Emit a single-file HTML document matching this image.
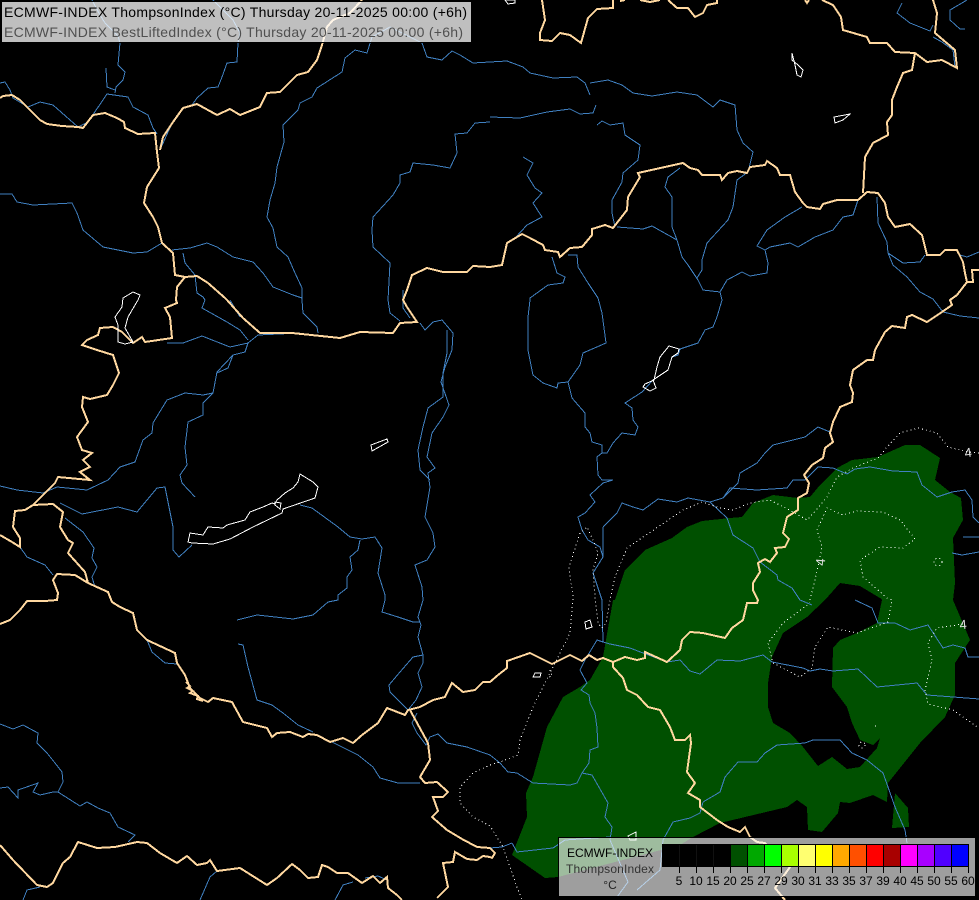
<!DOCTYPE html>
<html><head><meta charset="utf-8"><title>ECMWF-INDEX ThompsonIndex</title>
<style>
html,body{margin:0;padding:0;background:#000;width:979px;height:900px;overflow:hidden}
svg{display:block;position:absolute;left:0;top:0}
polyline,polygon.l{fill:none}
.r polyline{stroke:#4080c0;stroke-width:1}
.b polyline{stroke:#ffd8a0;stroke-width:2}
.w polygon{stroke:#fff;stroke-width:1;fill:none}
.c polyline,.c circle{stroke:#fff;stroke-width:1;fill:none;stroke-dasharray:1 3}
text{font-family:"Liberation Sans",sans-serif}
</style></head><body>
<svg width="979" height="900" viewBox="0 0 979 900" xmlns="http://www.w3.org/2000/svg">
<rect width="979" height="900" fill="#000"/>
<g fill="#005000" shape-rendering="crispEdges">
<path fill-rule="evenodd" d="M615,600 L625,570 645,550 672,538 687,527 702,521 730,518 742,517 753,503 773,495 798,498 810,497 820,485 837,468 852,460 878,457 905,445 920,445 940,458 935,480 950,492 961,498 963,520 953,538 955,583 953,600 970,640 955,663 955,695 945,717 920,743 888,783 887,802 873,795 850,803 840,802 838,813 822,832 808,830 807,807 797,800 787,807 720,823 693,837 680,845 558,877 545,878 512,855 527,817 526,793 533,777 547,727 563,697 580,687 590,680 603,657 613,600 Z M825,600 L840,583 860,586 880,598 882,600 877,623 857,633 840,640 833,648 832,687 847,707 852,723 860,740 873,745 880,738 877,748 860,767 847,769 832,757 818,766 803,747 790,733 773,723 768,707 768,683 772,657 783,633 807,617 Z"/>
<polygon points="895,793 908,808 909,827 892,828"/>
</g>
<g class="r" fill="none" shape-rendering="crispEdges">
<polyline points="120,43 118,65 125,72 123,80 116,87 115,93"/>
<polyline points="106,68 107,87 115,90"/>
<polyline points="0,83 5,82 10,90 13,98 28,107 40,102 53,105 78,127 88,122 107,94 128,97 133,107 148,115 153,128 157,134"/>
<polyline points="92,0 100,15 105,23 118,36 120,43"/>
<polyline points="213,0 233,20 240,33 238,43 237,62 227,63 222,77 218,87 208,88 197,98 192,105"/>
<polyline points="160,150 168,132 173,122"/>
<polyline points="372,37 367,53 355,50 345,58 342,72 317,88 312,97 300,103 298,110 283,125 284,142 277,167 275,183 270,200 267,217 273,228 277,247 288,257 295,273 302,288 302,300 303,313 317,327 318,333"/>
<polyline points="372,37 390,27 410,37"/>
<polyline points="410,37 422,43 427,57 442,60 452,51 460,55 473,63 490,62 507,61 523,67 530,73 553,78 577,77 585,83 590,95"/>
<polyline points="590,83 608,80 622,85 633,93 652,96 677,92 697,95 713,107 720,100 735,105 737,130 743,143 753,152 748,172 737,180 733,207 728,220 707,243 702,260 702,270 697,278 703,290 720,292 722,300 717,317 713,327 705,330 698,343 680,349 678,355 672,357 668,370 653,380 642,392 625,403 632,408 633,420 638,427 635,435 622,433 613,443 607,453 602,453 597,457 598,475 602,480 613,480 603,483 590,495 595,502 585,513 578,517 582,530 588,540 600,547 603,557 593,573 602,600 603,642 597,640 585,660 580,670 587,683 581,690 589,695 590,703 595,713 597,728 598,747 590,750 589,763 582,773"/>
<polyline points="720,292 727,280 742,272 750,276 767,273 768,263 765,250 757,246 767,230 785,217 802,207"/>
<polyline points="765,250 770,247 790,243 798,247 815,237 833,230 843,217 853,215 858,200"/>
<polyline points="490,117 520,118 547,112 570,109 580,114 593,113 596,105"/>
<polyline points="597,125 602,121 610,125 623,123 625,135 640,145 638,160 623,173 622,182 612,200 612,213 615,227"/>
<polyline points="617,227 643,229 652,226 677,240 682,257 688,265 698,280"/>
<polyline points="523,157 533,163 527,175 535,188 542,193 533,203 542,217 527,225 515,238"/>
<polyline points="680,168 668,177 665,187 672,197 672,227 677,240"/>
<polyline points="552,257 557,273 565,277 563,283 548,285 530,298 530,300 528,317 528,350 533,375 543,383 557,388 558,383 568,382 572,398 585,413 585,427 590,433 592,442 602,445 602,453"/>
<polyline points="568,255 577,255 578,267 588,283 598,298 602,313 606,343 583,353 580,365 568,382"/>
<polyline points="902,3 897,13 910,23 930,31 933,25"/>
<polyline points="933,37 942,42 953,50 955,67"/>
<polyline points="967,0 950,10 950,20 960,29 965,29"/>
<polyline points="877,197 878,223 887,242 888,253 903,263 920,262 925,255"/>
<polyline points="888,253 893,265 907,277 920,292 933,299 943,312 960,316 979,318"/>
<polyline points="960,255 967,257 979,252"/>
<polyline points="0,194 12,194 17,202 33,205 72,203 77,213 83,230 103,247 133,253 147,252 162,243"/>
<polyline points="172,250 190,248 207,243 217,247 233,257 253,262 263,273 273,287 293,295 302,298"/>
<polyline points="183,253 185,263 195,275 197,293 203,297 205,300 202,308 227,322 240,330 248,340"/>
<polyline points="490,122 475,123 467,133 455,134 457,153 450,168 433,165 413,163 410,172 400,175 400,183 393,195 373,217 372,230 373,247 390,263 388,300 390,313 400,321"/>
<polyline points="403,290 403,308 410,318"/>
<polyline points="230,300 240,317"/>
<polyline points="167,343 183,343 202,336 230,347 248,343 258,335 300,333"/>
<polyline points="248,343 245,352 233,355 217,372 213,393 203,395 185,393 167,400 153,423 152,433 143,440 135,462 120,467 108,480 87,490 57,487 43,493 17,490 0,486"/>
<polyline points="233,355 228,368 217,373"/>
<polyline points="213,393 203,403 203,415 188,422 185,447 187,465 180,475 182,483 195,497"/>
<polyline points="60,503 82,514 118,507 137,512 157,488 165,487 173,527 173,550 179,557 192,545"/>
<polyline points="65,518 83,532 94,548 92,558 97,567 92,577 95,587"/>
<polyline points="20,547 27,557 45,565 53,575"/>
<polyline points="300,505 312,508 338,527 350,537 362,539 375,537 382,548 378,573 385,595 385,600 382,612 398,617 413,622 420,622"/>
<polyline points="360,540 358,550 350,557 352,570 347,577 347,588 338,595 338,600 328,602 313,615 293,619 257,615 237,620"/>
<polyline points="420,323 425,330 433,322 442,320 453,333 452,350 445,367 441,382 449,405 443,417 432,433 427,457 435,468 428,473 430,487 425,517 433,533 435,547 427,560 415,565 422,587 423,600 418,617 421,625 418,637 423,655 423,663 418,673 422,687 416,700 408,710"/>
<polyline points="447,330 447,353 443,373 443,397 428,408 423,427 418,450 420,470 430,480"/>
<polyline points="423,655 413,657 400,672 389,685 390,692 408,710"/>
<polyline points="0,724 13,729 23,725 38,733 37,743 47,753 55,763 62,772 63,782 58,792 80,806 87,802 98,808 110,813 118,827 135,835 128,842"/>
<polyline points="0,788 8,787 18,798 18,790 38,783 33,792 40,795 53,792 58,792"/>
<polyline points="238,644 243,645 248,667 257,700 272,705 283,713 298,725 313,732"/>
<polyline points="332,742 358,755 373,767 380,778 398,783 420,783"/>
<polyline points="417,713 412,723 417,733 426,745 430,737 438,734 447,743 467,747 490,755 500,763 508,772 517,773 533,783 570,785 577,783 582,773 592,775 608,803 605,817 612,827 610,840 628,882 617,897"/>
<polyline points="147,640 152,652 165,663 177,664"/>
<polyline points="603,642 610,644 630,648 643,653 667,662 680,660 690,671 700,674 717,660 740,661 763,655 772,662 803,668 810,671 820,669 833,671 858,669 877,687 917,683 927,695 979,699"/>
<polyline points="855,600 872,608 878,623 895,623 910,630 928,625 943,648 953,645 965,648 968,657 979,657"/>
<polyline points="703,802 720,792 725,777 738,762 757,762 765,753 777,745 805,743 813,740 840,740 852,753 867,760 883,773 888,787 895,807 905,830 907,843"/>
<polyline points="703,802 700,813 690,818 673,822 663,840 660,870 637,890"/>
<polyline points="512,843 502,847 490,848"/>
<polyline points="512,843 517,852 553,848 565,840 610,837"/>
<polyline points="603,527 617,513 622,503 633,507 643,510 658,499 677,502 688,498 710,502 727,518 733,535 753,548 760,562 777,575 778,580 792,588 800,600 812,605"/>
<polyline points="603,557 603,527"/>
<polyline points="710,502 723,498 730,488 757,490 787,488 793,480 805,480 818,467 833,468 847,474 855,469 870,467 893,471 917,472 922,485 937,497 952,492 965,490 972,500 973,517 979,523"/>
<polyline points="723,498 738,483 740,473 757,463 765,453 773,445 805,437 818,427 830,432"/>
<polyline points="979,537 963,537"/>
<polyline points="979,552 962,555 952,553"/>
<polyline points="23,900 27,890 40,887"/>
<polyline points="200,900 210,877 217,871"/>
<polyline points="335,900 343,885 353,882"/>
<polyline points="365,878 378,876 387,880"/>
</g>
<g class="b" fill="none" shape-rendering="crispEdges">
<polyline points="0,98 3,96 12,95 20,100 27,107 40,120 47,124 62,126 78,127 83,128 93,115 105,113 117,118 124,122 125,128 138,134 155,133 157,152 159,168 147,187 144,203 153,217 158,227 162,243 173,253 175,275 185,277 197,276 208,283 225,298 227,300 243,318 260,333 292,333 340,338 360,332 393,333 400,323 417,322 407,307 403,300 407,290 412,275 427,268 443,272 467,272 473,266 490,267 502,265 507,243 522,234 530,238 543,245 545,250 558,252 560,257 570,248 582,247 592,235 592,229 605,225 613,228 627,210 628,197 640,177 638,173 683,163 690,168 698,170 702,175 720,175 722,180 728,173 737,171 747,173 750,167 765,165 767,161 777,168 780,175 790,175 795,192 803,203 807,207 820,209 823,204 837,200 858,200 867,192 878,193 885,203 888,217 895,227 910,224 922,235 927,255 940,255 945,250 957,250 963,262 965,273 967,282 973,282 972,270 979,270"/>
<polyline points="967,282 957,295 950,300 952,305 942,312 927,322 912,315 907,317 905,328 892,326 885,332 875,350 873,360 867,360 853,370 850,385 853,393 852,402 840,407 833,422 830,433 833,442 825,448 823,458 812,465 804,475 809,483 807,493 798,498 798,510 787,517 783,533 789,539 785,547 775,548 777,553 770,562 765,559 758,563 760,572 753,583 753,590 758,600 757,603 747,603 743,620 732,628 725,638 703,633 690,632 682,640 680,650 667,662 645,652 645,658 637,660 625,657 613,662 603,658 597,660 589,655 582,661 570,655 552,664 530,653 507,661 507,668 498,675 490,682 483,682 475,690 463,692 452,683 445,697 433,700 420,707 408,710 405,715 387,708 378,723 362,735 353,743 343,738 330,742 317,735 308,734 303,737 290,732 277,733 272,737 267,728 243,722 232,702 213,698 208,702 200,698 190,688 185,675 177,663 175,653 147,640 137,630 133,613 120,607 112,602 108,592 88,583 75,575 57,574 53,580 58,593 57,600 45,601 27,601 20,610 10,620 0,624"/>
<polyline points="160,150 163,137 173,122 183,108 197,104 217,115 230,109 240,115 260,107 267,93 280,92 297,75 308,72 317,60 322,45 327,27 333,20 350,13 362,0"/>
<polyline points="185,277 177,287 176,300 177,303 165,308 170,317 172,338 145,342 142,337 133,343 122,332 113,327 100,328 98,335 87,340 82,345 97,350 113,355 119,373 113,385 107,395 90,399 83,397 82,407 88,422 77,437 82,450 92,453 83,460 90,467 80,472 90,480 58,477 55,483 50,488 33,505 25,510 15,511 13,527 20,538 20,547 12,542 0,535"/>
<polyline points="33,505 53,504 63,512 60,527 68,540 73,543 68,553 85,572 88,583"/>
<polyline points="542,0 545,20 540,33 540,40 552,41 560,33 570,35 581,43 588,18 597,9 613,8 613,0"/>
<polyline points="620,1 625,0"/>
<polyline points="640,0 650,2 660,0"/>
<polyline points="668,0 677,8 688,8 695,17 703,13 707,5 717,3 717,0"/>
<polyline points="805,0 807,3 809,0"/>
<polyline points="822,0 833,5 841,17 843,30 867,37 870,43 887,43 895,52 915,53 927,62 942,60 957,68 955,50 935,33 937,13 933,0"/>
<polyline points="915,53 912,70 903,73 897,87 892,100 892,115 887,122 888,135 873,143 865,157 863,193"/>
<polyline points="613,662 613,667 623,678 627,690 637,695 648,707 660,710 670,727 675,740 685,740 690,735 691,743 687,772 695,783 688,793 700,800 700,807 717,820 728,827 740,832 745,827 750,837 757,842 765,843 790,867 775,888 785,900"/>
<polyline points="0,845 13,860 37,885 47,887 53,883 63,863 70,857 78,842 97,848 115,847 137,842 147,843 160,853 177,863 187,856 197,865 207,863 210,860 217,871 240,868 267,885 277,878 292,864 300,870 308,878 318,877 322,865 328,867 337,873 348,873 362,883 373,876 380,883 387,877 388,888 397,895 402,900"/>
<polyline points="410,710 428,743 430,760 420,777 425,783 437,782 448,792 443,797 433,797 438,811 432,817 447,830 462,839 477,847 490,848 495,853 492,858 490,857 483,856 477,860 467,859 455,852 453,862 443,863 448,887 437,898"/>
<polyline points="186,682 190,686 187,688 193,691 190,693 198,696 197,699 203,701"/>
</g>
<g class="w" fill="none" shape-rendering="crispEdges">
<polygon points="300,474 298,482 293,488 285,493 277,500 275,504 272,503 263,507 250,512 245,520 227,525 223,528 208,527 203,535 190,533 188,542 192,543 213,544 230,539 253,527 282,513 283,509 315,498 318,487 313,482"/>
<polygon points="275,502 281,503 280,509 275,505"/>
<polygon points="387,439 388,442 372,451 371,445"/>
<polygon points="123,298 133,292 140,295 138,300 128,317 125,328 133,342 125,344 118,342 118,325 115,317 122,307"/>
<polygon points="792,53 792,60 798,65 803,70 801,77 797,75 795,65"/>
<polygon points="834,117 850,114 843,120 835,123"/>
<polygon points="505,0 508,4 515,3 515,0"/>
<polygon points="669,346 679,349 678,353 672,357 668,370 653,380 656,388 650,391 643,387 645,384 654,380 657,367 660,357"/>
<polygon points="585,622 590,620 592,627 586,629"/>
<polygon points="535,673 541,673 540,677 533,677"/>
<polygon points="628,836 636,832 636,840 630,840"/>
</g>
<g class="c" fill="none" shape-rendering="crispEdges">
<polyline points="979,453 968,452 948,447 937,433 918,428 900,433 887,447 878,458 853,468 837,477 827,497 818,508 807,520 795,513 770,500 750,503 733,510 720,508 702,502 683,510 627,548 615,577 610,600 606,623 602,628 598,623 595,597 593,570 598,553 593,540 587,527 580,533 569,567 573,597 570,633 550,673 533,707 520,740 518,755 500,762 490,765 473,773 460,787 460,803 473,817 490,826 503,847 517,887 522,900"/>
<polyline points="810,600 818,567 822,547 817,530 827,508 843,515 857,511 883,512 900,520 915,539 903,548 880,547 860,560 863,577 887,598 892,600 888,622 857,633 828,627 815,647 812,668 800,677 773,663 768,643 783,623 810,603"/>
<polyline points="963,624 937,628 928,643 932,660 925,690 928,704 953,710 979,728"/>
<circle cx="938" cy="562" r="4"/>
<circle cx="862" cy="745" r="3"/>
<polyline points="875,726 878,726"/>
<polyline points="550,670 552,676 549,677"/>
</g>
<g fill="#e0e0e0" font-size="13">
<text x="968" y="457" text-anchor="middle" transform="rotate(-8 968 452)">4</text>
<text x="820" y="567" text-anchor="middle" transform="rotate(-85 820 562)">4</text>
<text x="963" y="629" text-anchor="middle" transform="rotate(-5 963 624)">4</text>
</g>
<!-- header -->
<rect x="1.5" y="1.5" width="470" height="41" fill="#fff" fill-opacity=".75" stroke="#000" stroke-width="1" shape-rendering="crispEdges"/>
<text x="4" y="17" font-size="14" fill="#000" textLength="463" lengthAdjust="spacing">ECMWF-INDEX ThompsonIndex (°C) Thursday 20-11-2025 00:00 (+6h)</text>
<text x="4" y="37" font-size="14" fill="#505050" textLength="459" lengthAdjust="spacing">ECMWF-INDEX BestLiftedIndex (°C) Thursday 20-11-2025 00:00 (+6h)</text>
<!-- legend -->
<rect x="558.5" y="837.5" width="417" height="59" fill="#fff" fill-opacity=".62" stroke="#000" stroke-width="1" shape-rendering="crispEdges"/>
<g shape-rendering="crispEdges" stroke="#000" stroke-width="1">
<rect x="662.5" y="844.5" width="68" height="22" fill="#000"/>
<rect x="730.5" y="844.5" width="17" height="22" fill="#005000"/>
<rect x="747.5" y="844.5" width="17" height="22" fill="#00a800"/>
<rect x="764.5" y="844.5" width="17" height="22" fill="#00ff00"/>
<rect x="781.5" y="844.5" width="17" height="22" fill="#a8ff00"/>
<rect x="798.5" y="844.5" width="17" height="22" fill="#ffff70"/>
<rect x="815.5" y="844.5" width="17" height="22" fill="#ffff00"/>
<rect x="832.5" y="844.5" width="17" height="22" fill="#ffa800"/>
<rect x="849.5" y="844.5" width="17" height="22" fill="#ff5000"/>
<rect x="866.5" y="844.5" width="17" height="22" fill="#ff0000"/>
<rect x="883.5" y="844.5" width="17" height="22" fill="#a80000"/>
<rect x="900.5" y="844.5" width="17" height="22" fill="#ff00ff"/>
<rect x="917.5" y="844.5" width="17" height="22" fill="#a800ff"/>
<rect x="934.5" y="844.5" width="17" height="22" fill="#5000ff"/>
<rect x="951.5" y="844.5" width="17" height="22" fill="#0000ff"/>
<path fill="none" d="M679.5,867V873M696.5,867V873M713.5,867V873M730.5,867V873M747.5,867V873M764.5,867V873M781.5,867V873M798.5,867V873M815.5,867V873M832.5,867V873M849.5,867V873M866.5,867V873M883.5,867V873M900.5,867V873M917.5,867V873M934.5,867V873M951.5,867V873M968.5,867V873"/>
<path fill="none" stroke="#111" d="M679.5,845V866M696.5,845V866M713.5,845V866"/>
</g>
<g font-size="12" fill="#000" text-anchor="middle">
<text x="679" y="885">5</text><text x="696" y="885">10</text><text x="713" y="885">15</text><text x="730" y="885">20</text><text x="747" y="885">25</text><text x="764" y="885">27</text><text x="781" y="885">29</text><text x="798" y="885">30</text><text x="815" y="885">31</text><text x="832" y="885">33</text><text x="849" y="885">35</text><text x="866" y="885">37</text><text x="883" y="885">39</text><text x="900" y="885">40</text><text x="917" y="885">45</text><text x="934" y="885">50</text><text x="951" y="885">55</text><text x="968" y="885">60</text>
</g>
<text x="567" y="857" font-size="12" fill="#000" textLength="86" lengthAdjust="spacing">ECMWF-INDEX</text>
<text x="566" y="873" font-size="12" fill="#333" textLength="88" lengthAdjust="spacing">ThompsonIndex</text>
<text x="610" y="889" font-size="12" fill="#222" text-anchor="middle">°C</text>
</svg>
</body></html>
